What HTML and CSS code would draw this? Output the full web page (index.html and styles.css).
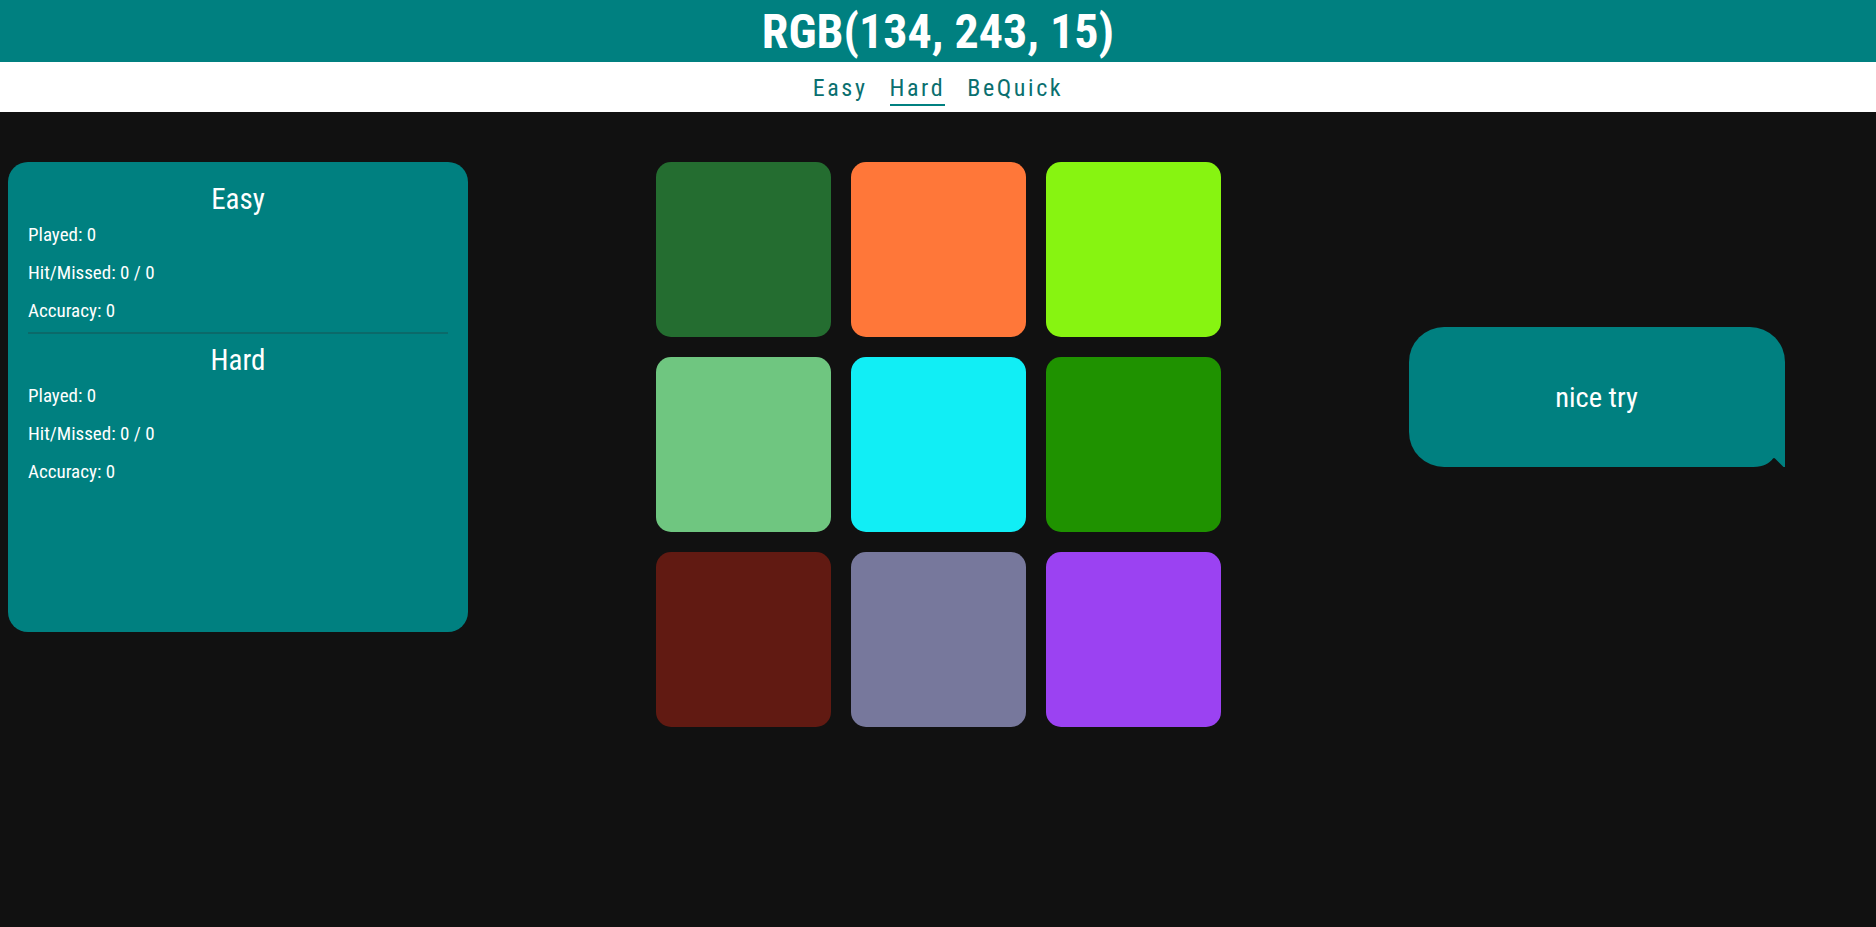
FILE: index.html
```html
<!DOCTYPE html>
<html>
<head>
<meta charset="utf-8">
<link rel="stylesheet" href="styles.css">
</head>
<body>
<header class="top">
  <h1 class="title">RGB(134, 243, 15)</h1>
</header>
<nav class="modes">
  <a class="mode">Easy</a>
  <a class="mode active">Hard</a>
  <a class="mode">BeQuick</a>
</nav>
<main class="game">
  <section class="left">
    <div class="stats">
      <h2 class="stats-title">Easy</h2>
      <p class="stat">Played: 0</p>
      <p class="stat">Hit/Missed: 0 / 0</p>
      <p class="stat">Accuracy: 0</p>
      <hr class="divider">
      <h2 class="stats-title">Hard</h2>
      <p class="stat">Played: 0</p>
      <p class="stat">Hit/Missed: 0 / 0</p>
      <p class="stat">Accuracy: 0</p>
    </div>
  </section>
  <section class="board">
    <div class="tile c1"></div>
    <div class="tile c2"></div>
    <div class="tile c3"></div>
    <div class="tile c4"></div>
    <div class="tile c5"></div>
    <div class="tile c6"></div>
    <div class="tile c7"></div>
    <div class="tile c8"></div>
    <div class="tile c9"></div>
  </section>
  <section class="right">
    <div class="bubble">nice try</div>
  </section>
</main>
</body>
</html>
```
FILE: styles.css
```css
html, body {
  margin: 0;
  padding: 0;
  background: #111111;
  font-family: "Roboto Condensed", Roboto, "Liberation Sans Narrow", sans-serif;
  font-stretch: 75%;
  color: #ffffff;
  height: 100%;
}

.top {
  background: #008080;
  height: 62px;
  display: flex;
  align-items: center;
  justify-content: center;
}

.title {
  margin: 0;
  font-size: 48px;
  font-weight: 700;
  line-height: 62px;
  padding-top: 2px;
}

.modes {
  background: #ffffff;
  height: 50px;
  display: flex;
  justify-content: center;
  align-items: flex-start;
  gap: 22px;
}

.mode {
  color: #0a6f6f;
  font-size: 24px;
  letter-spacing: 2.6px;
  line-height: 26px;
  padding-top: 13px;
  padding-bottom: 3px;
  border-bottom: 2px solid transparent;
}

.mode.active {
  border-bottom-color: #008080;
}

.game {
  display: flex;
  align-items: flex-start;
  padding: 50px 8px 0 8px;
}

.left {
  flex: 1;
}

.right {
  flex: 1;
  padding-top: 165px;
}

.stats {
  width: 420px;
  height: 430px;
  background: #008080;
  border-radius: 20px;
  padding: 20px;
}

.stats-title {
  margin: 0;
  text-align: center;
  font-size: 29px;
  font-weight: 400;
  line-height: 34px;
}

.stat {
  margin: 0;
  font-size: 19px;
  line-height: 38px;
}

.divider {
  border: 0;
  height: 2px;
  background: #0b6a6a;
  margin: 2px 0 9px 0;
}

.board {
  display: grid;
  grid-template-columns: repeat(3, 175px);
  grid-auto-rows: 175px;
  gap: 20px;
}

.tile {
  border-radius: 15px;
}

.c1 { background: #246d30; }
.c2 { background: #ff7739; }
.c3 { background: #87f411; }
.c4 { background: #6fc680; }
.c5 { background: #11eef5; }
.c6 { background: #1f9200; }
.c7 { background: #611a12; }
.c8 { background: #77789c; }
.c9 { background: #9b42f2; }

.bubble {
  position: relative;
  margin-left: 188px;
  width: 376px;
  height: 140px;
  background: #008080;
  border-radius: 35px 35px 0 35px;
  display: flex;
  align-items: center;
  justify-content: center;
  font-size: 28.5px;
}

.bubble::after {
  content: "";
  position: absolute;
  right: 0;
  bottom: 0;
  width: 31px;
  height: 10px;
  background: #111111;
  clip-path: path('M0 10 C10 10 16 6 19.5 1.5 Q20.5 0.3 21.5 1.5 L30 10 Z');
}
```
